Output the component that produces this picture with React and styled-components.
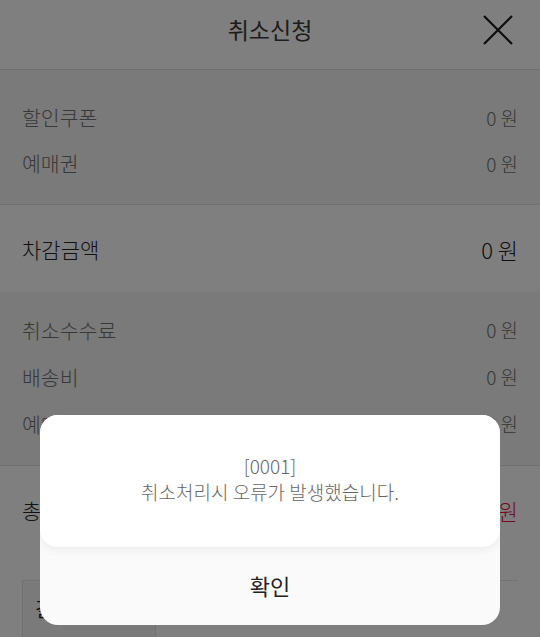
import React from "react";
import styled, { createGlobalStyle } from "styled-components";

const Global = createGlobalStyle`
  html, body { margin: 0; padding: 0; background: #fff; }
  body { font-family: "Noto Sans CJK KR", "Noto Sans", sans-serif; overflow: hidden; }
  * { box-sizing: border-box; }
`;

const Page = styled.div`
  position: relative;
  width: 540px;
  height: 637px;
  overflow: hidden;
  background: #fff;
`;

const Header = styled.header`
  height: 70px;
  display: flex;
  align-items: center;
  justify-content: center;
  position: relative;
  border-bottom: 1px solid #dcdcdc;
  background: #fff;
`;

const Title = styled.h1`
  margin: 0 0 12px;
  font-size: 23px;
  font-weight: 400;
  color: #3a3a3a;
`;

const CloseButton = styled.button`
  position: absolute;
  right: 26px;
  top: 14px;
  width: 32px;
  height: 32px;
  padding: 0;
  border: 0;
  background: none;
  display: flex;
  align-items: center;
  justify-content: center;
`;

const Section = styled.section`
  background: ${(p) => (p.$muted ? "#f4f4f4" : "#fff")};
  padding: ${(p) => p.$pad || "0 22px"};
  border-bottom: ${(p) => (p.$line ? "1px solid #dedede" : "0")};
`;

const Row = styled.div`
  height: ${(p) => p.$h || 46}px;
  display: flex;
  align-items: center;
  justify-content: space-between;
  font-size: ${(p) => (p.$strong ? 21 : 20.5)}px;
  font-weight: 300;
  color: ${(p) => (p.$strong ? "#222" : "#707070")};
`;

const Value = styled.span`
  color: ${(p) => (p.$red ? "#e8173f" : "inherit")};
  font-size: ${(p) => (p.$strong ? 22 : 19)}px;
  font-weight: 300;
  white-space: nowrap;
`;

const Tabs = styled.div`
  margin: 26px 22px 0;
  border-top: 1px solid #e4e4e4;
  display: flex;
`;

const Tab = styled.div`
  width: 134px;
  height: 60px;
  background: #f4f4f4;
  border: 1px solid #e4e4e4;
  border-top: 0;
  padding: 14px 0 0 12px;
  font-size: 19px;
  color: #222;
`;

const Overlay = styled.div`
  position: absolute;
  inset: 0;
  background: rgba(0, 0, 0, 0.5);
  display: flex;
  align-items: flex-end;
  justify-content: center;
  padding-bottom: 12px;
`;

const Dialog = styled.div`
  width: 460px;
  height: 210px;
  border-radius: 18px;
  background: #fafafa;
  display: flex;
  flex-direction: column;
  overflow: hidden;
`;

const Message = styled.div`
  height: 132px;
  background: #fff;
  border-radius: 0 0 18px 18px;
  box-shadow: 0 3px 8px rgba(0, 0, 0, 0.06);
  display: flex;
  flex-direction: column;
  align-items: center;
  justify-content: center;
  padding-bottom: 4px;
  font-size: 19px;
  font-weight: 300;
  line-height: 26px;
  color: #666;
  text-align: center;
`;

const Confirm = styled.button`
  flex: 1;
  border: 0;
  background: transparent;
  font-family: inherit;
  font-size: 22px;
  font-weight: 400;
  color: #222;
  padding: 0 0 2px;
`;

function Line({ label, value, strong, red, h }) {
  return (
    <Row $strong={strong} $h={h}>
      <span>{label}</span>
      <Value $strong={strong} $red={red}>{value}</Value>
    </Row>
  );
}

export default function App() {
  return (
    <Page>
      <Global />
      <Header>
        <Title>취소신청</Title>
        <CloseButton aria-label="닫기">
          <svg width="30" height="30" viewBox="0 0 30 30">
            <path d="M1 1 L29 29 M29 1 L1 29" stroke="#1a1a1a" strokeWidth="2.2" fill="none" />
          </svg>
        </CloseButton>
      </Header>

      <Section $muted $line $pad="24px 22px 18px">
        <Line label="할인쿠폰" value="0 원" />
        <Line label="예매권" value="0 원" />
      </Section>

      <Section>
        <Line label="차감금액" value="0 원" strong h={87} />
      </Section>

      <Section $muted $line $pad="14px 22px 18px">
        <Line label="취소수수료" value="0 원" h={47} />
        <Line label="배송비" value="0 원" h={47} />
        <Line label="예매수수료" value="0 원" h={47} />
      </Section>

      <Section>
        <Line label="총 환불금액" value="0 원" strong red h={88} />
      </Section>

      <Tabs>
        <Tab>결제정보</Tab>
      </Tabs>

      <Overlay>
        <Dialog role="alertdialog">
          <Message>
            <span>[0001]</span>
            <span>취소처리시 오류가 발생했습니다.</span>
          </Message>
          <Confirm>확인</Confirm>
        </Dialog>
      </Overlay>
    </Page>
  );
}
